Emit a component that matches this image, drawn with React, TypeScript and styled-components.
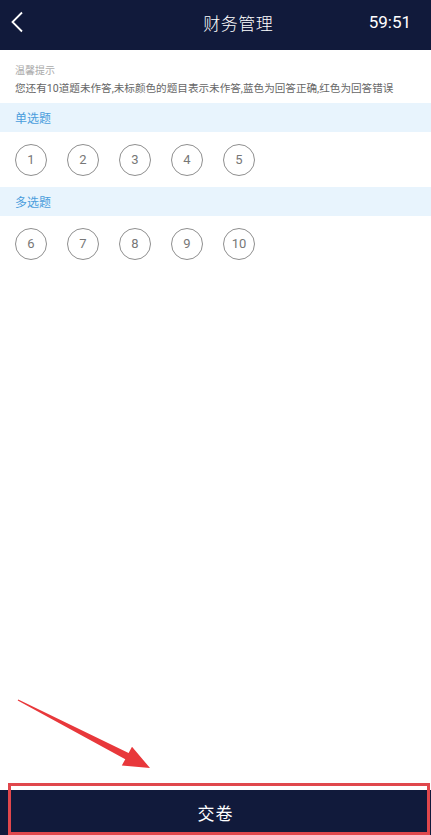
import React from "react";
import styled, { createGlobalStyle } from "styled-components";

const GlobalStyle = createGlobalStyle`
  html, body {
    margin: 0;
    padding: 0;
    background: #ffffff;
  }
  body {
    font-family: Roboto, "Noto Sans CJK SC", "Noto Sans", sans-serif;
  }
`;

const sections = [
  { title: "单选题", items: [1, 2, 3, 4, 5] },
  { title: "多选题", items: [6, 7, 8, 9, 10] },
];

// 答题卡页面
const App = () => {
  return (
    <Page>
      <GlobalStyle />
      <Header>
        <BackButton>
          <svg width="14" height="22" viewBox="0 0 14 22">
            <path d="M12 1.5 L2.5 11 L12 20.5" fill="none" stroke="#ffffff" strokeWidth="1.8" />
          </svg>
        </BackButton>
        <HeaderTitle>财务管理</HeaderTitle>
        <Timer>59:51</Timer>
      </Header>

      <Tips>
        <TipLabel>温馨提示</TipLabel>
        <TipText>
          您还有10道题未作答,未标颜色的题目表示未作答,蓝色为回答正确,红色为回答错误
        </TipText>
      </Tips>

      {sections.map((section) => (
        <Section key={section.title}>
          <SectionTitle>{section.title}</SectionTitle>
          <CircleRow>
            {section.items.map((n) => (
              <Circle key={n}>{n}</Circle>
            ))}
          </CircleRow>
        </Section>
      ))}

      <Spacer />

      <Footer>
        <Arrow width="140" height="75" viewBox="0 0 140 75">
          <path
            d="M-0.3 0.6 L107.3 59.2 L103.8 65.5 L132 68 L114 46.8 L110.6 53.1 L0.3 -0.6 Z"
            fill="#e8383b"
          />
        </Arrow>
        <Highlight />
        <SubmitButton>交卷</SubmitButton>
      </Footer>
    </Page>
  );
};

export default App;

const Page = styled.div`
  display: flex;
  flex-direction: column;
  width: 431px;
  height: 835px;
  overflow: hidden;
  background: #ffffff;
`;

const Header = styled.div`
  display: flex;
  flex-direction: row;
  align-items: center;
  justify-content: space-between;

  height: 50px;
  padding: 0 20px 0 10px;

  background: #111a3b;
  color: #ffffff;
`;

const BackButton = styled.div`
  display: flex;
  align-items: center;
  width: 60px;
  margin-top: -7px;
`;

const HeaderTitle = styled.div`
  margin-top: -6px;
  margin-left: 38px;
  font-size: 17px;
  font-weight: 300;
  letter-spacing: 0.5px;
`;

const Timer = styled.div`
  margin-top: -6px;
  font-size: 17px;
`;

const Tips = styled.div`
  display: flex;
  flex-direction: column;
  gap: 3px;

  height: 53px;
  padding: 12px 15px 0;
  box-sizing: border-box;
`;

const TipLabel = styled.span`
  color: #aaaaaa;
  font-size: 10px;
`;

const TipText = styled.span`
  color: #666666;
  font-size: 10.6px;
  white-space: nowrap;
`;

const Section = styled.div`
  display: flex;
  flex-direction: column;
`;

const SectionTitle = styled.div`
  display: flex;
  align-items: center;

  height: 29px;
  padding-left: 15px;

  background: #e8f4fd;
  color: #4a9ddc;
  font-size: 12px;
`;

const CircleRow = styled.div`
  display: flex;
  flex-direction: row;
  gap: 20px;

  height: 55px;
  padding-left: 15px;
  align-items: center;
`;

const Circle = styled.div`
  display: flex;
  align-items: center;
  justify-content: center;

  width: 30px;
  height: 30px;

  border: 1px solid #8f8f8f;
  border-radius: 50%;

  color: #777777;
  font-size: 13px;
`;

const Spacer = styled.div`
  flex: 1;
`;

const Footer = styled.div`
  position: relative;
  height: 45px;
`;

const Arrow = styled.svg`
  position: absolute;
  left: 18px;
  top: -90px;
  overflow: visible;
`;

const Highlight = styled.div`
  position: absolute;
  left: 8px;
  right: 1px;
  top: -7px;
  bottom: 0;
  border: 3px solid #e0474c;
  pointer-events: none;
  z-index: 1;
`;

const SubmitButton = styled.div`
  display: flex;
  align-items: center;
  justify-content: center;

  height: 45px;

  background: #111a3b;
  color: #ffffff;
  font-size: 17px;
  letter-spacing: 1px;
`;
